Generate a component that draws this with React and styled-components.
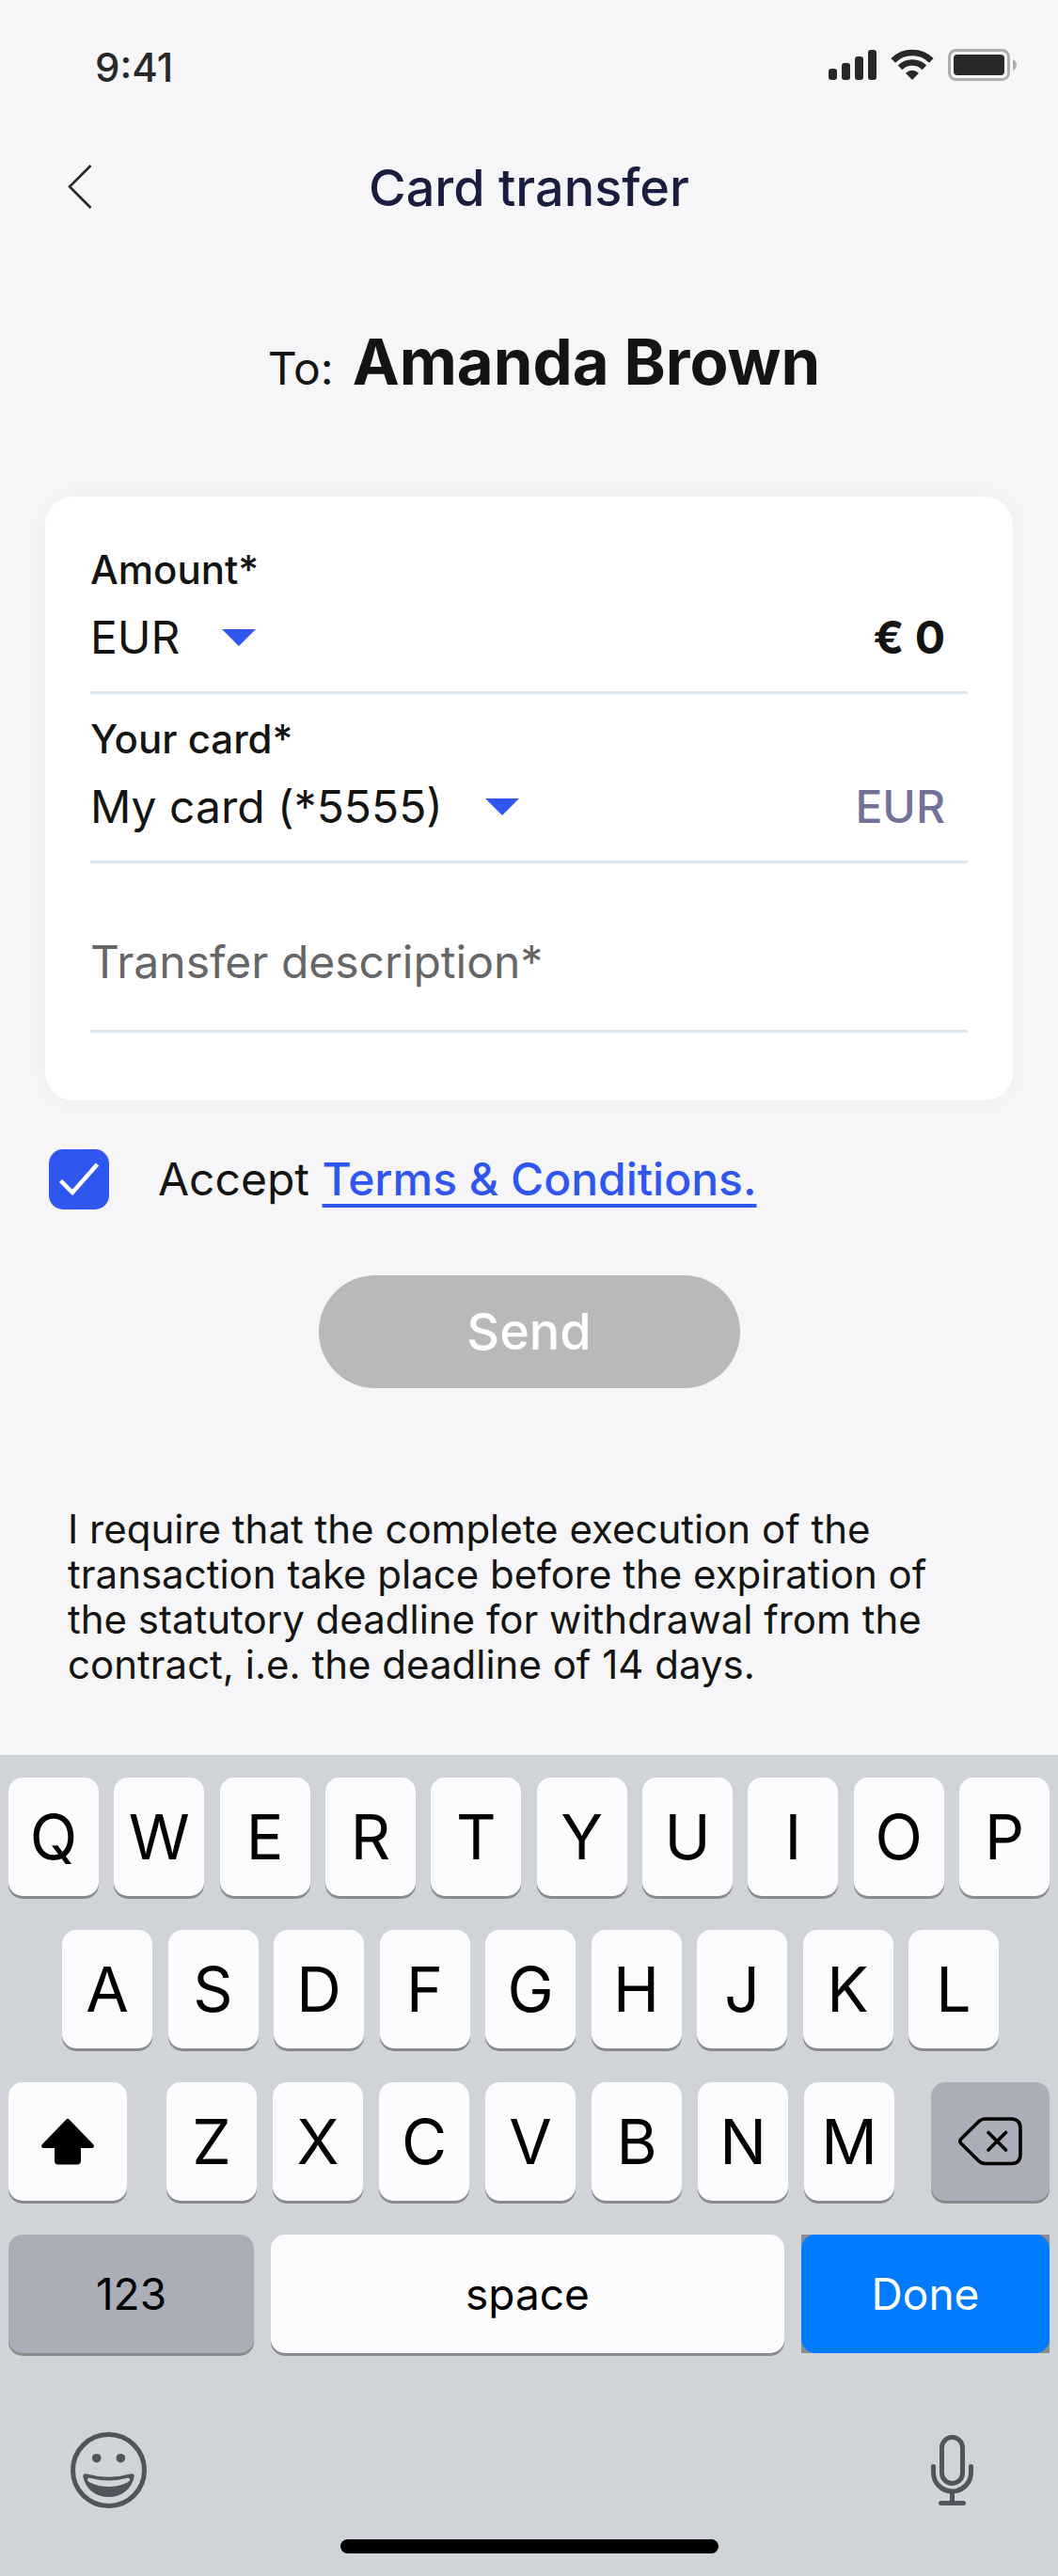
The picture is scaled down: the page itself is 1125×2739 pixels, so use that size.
import React, { useState } from 'react'
import styled, { createGlobalStyle } from 'styled-components'

const topRow = ['Q', 'W', 'E', 'R', 'T', 'Y', 'U', 'I', 'O', 'P']
const middleRow = ['A', 'S', 'D', 'F', 'G', 'H', 'J', 'K', 'L']
const bottomRow = ['Z', 'X', 'C', 'V', 'B', 'N', 'M']

const StatusIcons = () => (
  <svg width="201" height="34" viewBox="0 0 201 34" aria-hidden="true">
    <g fill="#282828">
      <rect x="0" y="21" width="9" height="12" rx="3" />
      <rect x="14" y="15" width="9" height="18" rx="3" />
      <rect x="28" y="8" width="9" height="25" rx="3" />
      <rect x="42" y="1" width="9" height="32" rx="3" />
    </g>
    <g fill="none" stroke="#282828" strokeWidth="6.5">
      <path d="M68.7 12.4a28.8 28.8 0 0 1 40.6 0" />
      <path d="M76.1 19.9a18.2 18.2 0 0 1 25.8 0" />
    </g>
    <path d="M89 33l-7-7.2q7-6 14 0z" fill="#282828" />
    <rect x="128.5" y="1.5" width="63" height="31" rx="7" fill="none" stroke="#aeaeb0" strokeWidth="3" />
    <rect x="133" y="6" width="54" height="22" rx="4" fill="#282828" />
    <path d="M196 11q4 2 4 6t-4 6z" fill="#aeaeb0" />
  </svg>
)

const BackIcon = () => (
  <svg width="26" height="50" viewBox="0 0 26 50" aria-hidden="true">
    <path d="M24.5 1L2 23.500l22.500 22.500" fill="none" stroke="#282828" strokeWidth="2.600" />
  </svg>
)

const Triangle = () => (
  <svg width="36" height="18" viewBox="0 0 36 18" aria-hidden="true">
    <path d="M0 0h36L18 18z" fill="#3056f0" />
  </svg>
)

const ShiftIcon = () => (
  <svg width="58" height="50" viewBox="0 0 58 50" aria-hidden="true">
    <path
      d="M27.500 1.500q1.500-1.500 3 0L56.500 28.500q1.500 3.500-2 3.500H43v13.500q0 4-4 4H19q-4 0-4-4V32H3.500Q0 32 1.500 28.500z"
      fill="#000"
    />
  </svg>
)

const DeleteIcon = () => (
  <svg width="68" height="52" viewBox="0 0 68 52" fill="none" stroke="#000" strokeWidth="3.600" strokeLinecap="round" aria-hidden="true">
    <path d="M28.500 2H56q10 0 10 10v27.500q0 10-10 10H28.500q-4 0-7-3L2.800 28q-2-2.200 0-4.500L21.500 5q3-3 7-3z" />
    <path d="M32 16.500l18.500 18.500M50.500 16.500L32 35" />
  </svg>
)

const EmojiIcon = () => (
  <svg width="81" height="81" viewBox="0 0 81 81" fill="#50555c" aria-hidden="true">
    <circle cx="40.500" cy="40.500" r="38" fill="none" stroke="#50555c" strokeWidth="5" />
    <circle cx="27.700" cy="27.700" r="4.800" />
    <circle cx="53.300" cy="27.700" r="4.800" />
    <path
      fillRule="evenodd"
      d="M16.500 44.300Q40.500 51.300 64.500 44.300Q68 44 67.700 47.500C65 61 54 69 40.500 69S16 61 13.400 47.500Q13 44 16.500 44.300zM20.500 48.700Q40.500 54.300 60.500 48.700Q63.300 48.300 63.200 50.700Q62.500 52.500 60.500 53.500Q51 58 40.500 58T20.500 53.500Q18.500 52.500 17.900 50.700Q17.800 48.300 20.500 48.700z"
    />
  </svg>
)

const MicIcon = () => (
  <svg width="45" height="76" viewBox="0 0 45 76" fill="none" stroke="#50555c" strokeWidth="5" strokeLinecap="round" aria-hidden="true">
    <rect x="11.500" y="2.500" width="22" height="49" rx="11" />
    <path d="M2.500 33.500V40a20 20 0 0 0 40 0V33.500" />
    <path d="M22.500 61v11M10.500 72.500h24" />
  </svg>
)

const App = () => {
  const [accepted, setAccepted] = useState(true)
  const [amount, setAmount] = useState('€ 0')
  const [description, setDescription] = useState('')

  return (
    <Screen>
      <GlobalStyle />
      <StatusBar>
        <Time>9:41</Time>
        <StatusIcons />
      </StatusBar>
      <Header>
        <BackButton type="button" aria-label="Back">
          <BackIcon />
        </BackButton>
        <Title>Card transfer</Title>
      </Header>
      <Recipient>
        <span>To:</span>
        <h2>Amanda Brown</h2>
      </Recipient>

      <Form onSubmit={(e) => e.preventDefault()}>
        <Card>
          <Field>
            <Label htmlFor="currency">Amount*</Label>
            <FieldRow>
              <Picker>
                <Select id="currency">
                  <option>EUR</option>
                  <option>USD</option>
                </Select>
                <Triangle />
              </Picker>
              <AmountInput
                aria-label="Amount"
                value={amount}
                onChange={(e) => setAmount(e.target.value)}
              />
            </FieldRow>
          </Field>
          <Field>
            <Label htmlFor="card">Your card*</Label>
            <FieldRow>
              <Picker>
                <Select id="card">
                  <option>My card (*5555)</option>
                </Select>
                <Triangle />
              </Picker>
              <CardCurrency>EUR</CardCurrency>
            </FieldRow>
          </Field>
          <Field $single>
            <DescriptionInput
              aria-label="Transfer description"
              placeholder="Transfer description*"
              value={description}
              onChange={(e) => setDescription(e.target.value)}
            />
          </Field>
        </Card>

        <Terms>
          <Checkbox
            id="terms"
            type="checkbox"
            checked={accepted}
            onChange={(e) => setAccepted(e.target.checked)}
          />
          <p>
            <label htmlFor="terms">Accept</label> <TermsLink href="#terms">Terms &amp; Conditions.</TermsLink>
          </p>
        </Terms>
        <SendButton type="submit">Send</SendButton>
      </Form>

      <Notice>
        I require that the complete execution of the transaction take place before the expiration of
        the statutory deadline for withdrawal from the contract, i.e. the deadline of 14 days.
      </Notice>

      <Keyboard>
        <KeyRow>
          {topRow.map((k) => <Key key={k} type="button">{k}</Key>)}
        </KeyRow>
        <KeyRow $inset>
          {middleRow.map((k) => <Key key={k} type="button">{k}</Key>)}
        </KeyRow>
        <KeyRow>
          <Key type="button" $wide aria-label="Shift"><ShiftIcon /></Key>
          <Letters>
            {bottomRow.map((k) => <Key key={k} type="button">{k}</Key>)}
          </Letters>
          <Key type="button" $wide $gray aria-label="Delete"><DeleteIcon /></Key>
        </KeyRow>
        <ActionRow>
          <ActionKey type="button" $gray>123</ActionKey>
          <ActionKey type="button">space</ActionKey>
          <DoneSlot>
            <DoneKey type="button">Done</DoneKey>
          </DoneSlot>
        </ActionRow>
        <Footer>
          <Tools>
            <IconButton type="button" aria-label="Emoji"><EmojiIcon /></IconButton>
            <IconButton type="button" aria-label="Dictate"><MicIcon /></IconButton>
          </Tools>
          <HomeIndicator />
        </Footer>
      </Keyboard>
    </Screen>
  )
}

export default App

const GlobalStyle = createGlobalStyle`
  * {
    box-sizing: border-box;
  }
  body {
    margin: 0;
    background: #f6f6f8;
  }
  h1, h2, p {
    margin: 0;
  }
  button, input, select {
    margin: 0;
    padding: 0;
    border: 0;
    background: none;
    color: inherit;
    font: inherit;
  }
  svg {
    display: block;
    flex: none;
  }
`

const Screen = styled.main`
  display: flex;
  flex-direction: column;
  min-height: 100vh;
  background: #f6f6f8;
  color: #141412;
  font-family: Inter, 'Liberation Sans', sans-serif;
  font-size: 48px;
  line-height: 60px;
`

const StatusBar = styled.div`
  display: flex;
  align-items: center;
  justify-content: space-between;
  height: 132px;
  padding: 6px 43px 0 101px;
`

const Time = styled.span`
  padding-top: 6px;
  color: #282828;
  font-size: 42px;
  font-weight: 500;
`

const Header = styled.header`
  display: grid;
  grid-template-columns: 1fr auto 1fr;
  align-items: center;
  height: 136px;
  padding: 0 72px;
`

const BackButton = styled.button`
  justify-self: start;
`

const Title = styled.h1`
  color: #1a1c40;
  font-size: 54px;
  font-weight: 500;
`

const Recipient = styled.div`
  display: flex;
  align-items: baseline;
  justify-content: center;
  gap: 20px;
  padding: 78px 0 104px 32px;

  h2 {
    font-size: 67px;
    font-weight: 700;
    line-height: 78px;
  }
`

const Form = styled.form`
  display: flex;
  flex-direction: column;
  padding: 0 48px;
`

const Card = styled.section`
  padding: 30px 48px 72px;
  border-radius: 30px;
  background: #fff;
  box-shadow: 0 0 24px rgba(0, 0, 0, 0.04);
`

const Field = styled.div`
  display: flex;
  flex-direction: column;
  justify-content: flex-end;
  gap: 18px;
  height: 180px;
  padding-bottom: ${(p) => (p.$single ? '42px' : '27px')};
  border-bottom: 3px solid #dbe5ee;
`

const Label = styled.label`
  font-size: 42px;
  font-weight: 500;
  line-height: 48px;
`

const FieldRow = styled.div`
  display: flex;
  align-items: center;
  justify-content: space-between;
  padding-right: 24px;
`

const Picker = styled.div`
  display: flex;
  align-items: center;
  gap: 45px;
`

const Select = styled.select`
  appearance: none;
  field-sizing: content;
  height: 60px;
  outline: none;
`

const AmountInput = styled.input`
  flex: 1;
  min-width: 0;
  height: 60px;
  outline: none;
  font-weight: 700;
  text-align: right;
`

const CardCurrency = styled.span`
  color: #71719a;
  font-weight: 500;
`

const DescriptionInput = styled.input`
  width: 100%;
  height: 60px;
  outline: none;

  &::placeholder {
    color: #666;
    opacity: 1;
  }
`

const Terms = styled.div`
  display: flex;
  align-items: center;
  gap: 52px;
  height: 64px;
  margin: 52px 4px 70px;
`

const Checkbox = styled.input`
  appearance: none;
  flex: none;
  width: 64px;
  height: 64px;
  border: 3px solid #3056f0;
  border-radius: 15px;

  &:checked {
    border: 0;
    background: #3056f0 center / 64px 64px no-repeat
      url("data:image/svg+xml,%3Csvg xmlns='http://www.w3.org/2000/svg' viewBox='0 0 64 64'%3E%3Cpath d='M12.500 33.500L25 46 51.500 16' fill='none' stroke='white' stroke-width='4.500'/%3E%3C/svg%3E");
  }
`

const TermsLink = styled.a`
  color: #3056f0;
  font-weight: 500;
  text-decoration: underline 4px;
  text-decoration-skip-ink: none;
  text-underline-offset: 9px;
`

const SendButton = styled.button`
  align-self: center;
  width: 448px;
  height: 120px;
  border-radius: 60px;
  background: #b9b9b9;
  color: #fff;
  font-size: 54px;
  font-weight: 500;
`

const Notice = styled.p`
  padding: 126px 120px 72px 72px;
  font-size: 42px;
  line-height: 48px;
`

const Keyboard = styled.section`
  display: flex;
  flex-direction: column;
  gap: 36px;
  margin-top: auto;
  padding: 24px 9px;
  background: #d0d3d7;
  color: #000;
`

const KeyRow = styled.div`
  display: flex;
  justify-content: space-between;
  padding: 0 ${(p) => (p.$inset ? '54px 0 57px' : '0')};
`

const Letters = styled.div`
  display: flex;
  flex: 1;
  justify-content: space-between;
  padding: 0 39px 0 42px;
`

const Key = styled.button`
  display: flex;
  align-items: center;
  justify-content: center;
  width: ${(p) => (p.$wide ? '126px' : '96px')};
  height: 126px;
  border-radius: 15px;
  background: ${(p) => (p.$gray ? '#abadb8' : '#fcfcfe')};
  box-shadow: 0 3px 0 #898a8d;
  font-size: 66px;
`

const ActionRow = styled.div`
  display: grid;
  grid-template-columns: 261fr 546fr 264fr;
  gap: 18px;
`

const ActionKey = styled(Key)`
  width: 100%;
  font-size: 46px;
`

const DoneSlot = styled.div`
  background: #8b8d92;
`

const DoneKey = styled(ActionKey)`
  background: #007aff;
  box-shadow: none;
  color: #fff;
`

const Footer = styled.div`
  display: flex;
  flex-direction: column;
  gap: 33px;
  padding-top: 48px;
`

const Tools = styled.div`
  display: flex;
  align-items: center;
  justify-content: space-between;
  padding: 0 81px 0 66px;
`

const IconButton = styled.button`
  display: block;
`

const HomeIndicator = styled.div`
  align-self: center;
  width: 402px;
  height: 15px;
  border-radius: 8px;
  background: #000;
`
